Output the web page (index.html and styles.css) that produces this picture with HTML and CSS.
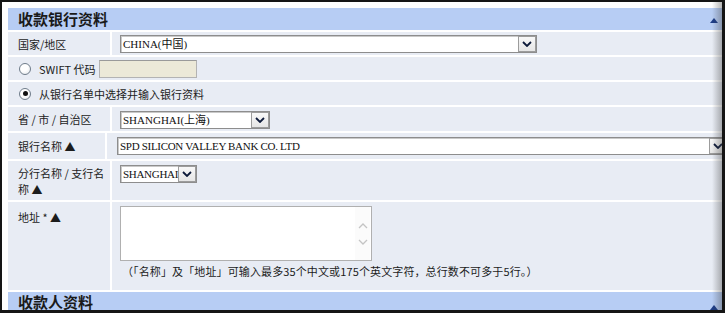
FILE: index.html
```html
<!DOCTYPE html>
<html lang="zh-CN">
<head>
<meta charset="utf-8">
<title>收款银行资料</title>
<link rel="stylesheet" href="styles.css">
</head>
<body>
<div class="frame">
  <div class="panel">
    <div class="section-head">
      <span class="title">收款银行资料</span>
      <span class="collapse"></span>
    </div>

    <div class="row r1">
      <div class="label">国家/地区</div>
      <div class="value">
        <div class="select sel-country">
          <span class="sel-text">CHINA(中国)</span>
          <span class="sel-btn"><svg width="10" height="6" viewBox="0 0 10 6"><path d="M1 1 L5 5 L9 1" fill="none" stroke="#0d1a3a" stroke-width="1.8"/></svg></span>
        </div>
      </div>
    </div>

    <div class="row r2">
      <div class="full">
        <span class="radio"></span>
        <span class="opt-text">SWIFT 代码</span>
        <span class="swift-input"></span>
      </div>
    </div>

    <div class="row r3">
      <div class="full">
        <span class="radio checked"></span>
        <span class="opt-text">从银行名单中选择并输入银行资料</span>
      </div>
    </div>

    <div class="row r4">
      <div class="label">省 / 市 / 自治区</div>
      <div class="value">
        <div class="select sel-prov">
          <span class="sel-text">SHANGHAI(上海)</span>
          <span class="sel-btn"><svg width="10" height="6" viewBox="0 0 10 6"><path d="M1 1 L5 5 L9 1" fill="none" stroke="#0d1a3a" stroke-width="1.8"/></svg></span>
        </div>
      </div>
    </div>

    <div class="row r5">
      <div class="label narrow">银行名称 ▲</div>
      <div class="value wide">
        <div class="select sel-bank">
          <span class="sel-text">SPD SILICON VALLEY BANK CO. LTD</span>
          <span class="sel-btn"><svg width="10" height="6" viewBox="0 0 10 6"><path d="M1 1 L5 5 L9 1" fill="none" stroke="#0d1a3a" stroke-width="1.8"/></svg></span>
        </div>
      </div>
    </div>

    <div class="row r6">
      <div class="label top">分行名称 / 支行名<br>称 ▲</div>
      <div class="value top">
        <div class="select sel-branch">
          <span class="sel-text">SHANGHAI</span>
          <span class="sel-btn"><svg width="10" height="6" viewBox="0 0 10 6"><path d="M1 1 L5 5 L9 1" fill="none" stroke="#0d1a3a" stroke-width="1.8"/></svg></span>
        </div>
      </div>
    </div>

    <div class="row r7">
      <div class="label top addr">地址 * ▲</div>
      <div class="value top addr-val">
        <div class="textarea">
          <span class="ta-scroll">
            <svg width="10" height="6" viewBox="0 0 10 6"><path d="M1 5 L5 1 L9 5" fill="none" stroke="#c4c4c4" stroke-width="1.3"/></svg>
            <svg width="10" height="6" viewBox="0 0 10 6"><path d="M1 1 L5 5 L9 1" fill="none" stroke="#c4c4c4" stroke-width="1.3"/></svg>
          </span>
        </div>
        <div class="note">（「名称」及「地址」可输入最多35个中文或175个英文字符，总行数不可多于5行。）</div>
      </div>
    </div>

    <div class="section-head second">
      <span class="title">收款人资料</span>
      <span class="collapse"></span>
    </div>
  </div>
</div>
</body>
</html>
```

FILE: styles.css
```css
* { box-sizing: border-box; }

html, body {
  margin: 0;
  padding: 0;
  background: #ffffff;
}

body {
  font-family: "Noto Sans CJK SC", "Noto Sans", sans-serif;
  font-size: 11px;
  color: #1c1c1c;
}

.frame {
  position: relative;
  width: 725px;
  height: 313px;
  border-style: solid;
  border-color: #151515;
  border-width: 2px 3px 3px 2px;
  padding: 6px 0 0 6px;
  background: #ffffff;
  overflow: hidden;
}

.frame::after {
  content: "";
  position: absolute;
  top: 0;
  right: 0;
  bottom: 0;
  width: 10px;
  background: linear-gradient(to right, rgba(60, 60, 60, 0), rgba(60, 60, 60, 0.38));
}

.panel {
  display: flex;
  flex-direction: column;
  gap: 2px;
  width: 714px;
}

.section-head {
  display: flex;
  align-items: center;
  height: 22px;
  background: #b7cdf4;
  padding: 0 4px 0 10px;
  flex: none;
}

.section-head.second {
  height: 20px;
}

.title {
  font-size: 15px;
  font-weight: bold;
  color: #1a1a1a;
  line-height: 18px;
}

.collapse {
  margin-left: auto;
  width: 0;
  height: 0;
  border-left: 4px solid transparent;
  border-right: 4px solid transparent;
  border-bottom: 5px solid #1d3d87;
  margin-top: 2px;
}

.section-head.second .collapse {
  margin-top: 10px;
}

.row {
  display: flex;
  gap: 2px;
  flex: none;
}

.r1, .r2, .r3 { height: 23px; }
.r4 { height: 24px; }
.r5 { height: 26px; }
.r6 { height: 39px; }
.r7 { height: 88px; }

.label {
  width: 102px;
  flex: none;
  background: #e8ecf4;
  padding: 0 4px 0 10px;
  display: flex;
  align-items: center;
  white-space: nowrap;
  line-height: 16px;
}

.label.narrow { width: 97px; }

.label.top {
  align-items: flex-start;
  padding-top: 4px;
  display: block;
}

.label.addr { padding-top: 7px; }

.value {
  flex: 1;
  background: #e8ecf4;
  display: flex;
  align-items: center;
  padding-left: 8px;
  min-width: 0;
}

.value.wide { padding-left: 10px; }

.value.top {
  align-items: flex-start;
  padding-top: 4px;
}

.full {
  flex: 1;
  background: #e8ecf4;
  display: flex;
  align-items: center;
  padding-left: 11px;
}

.radio {
  width: 12px;
  height: 12px;
  border-radius: 50%;
  border: 1px solid #6f7c8a;
  background: radial-gradient(circle at 40% 35%, #ffffff 40%, #dfe3e8 100%);
  display: inline-flex;
  align-items: center;
  justify-content: center;
  margin-right: 8px;
  flex: none;
}

.radio.checked::before {
  content: "";
  width: 5px;
  height: 5px;
  border-radius: 50%;
  background: #101010;
}

.opt-text {
  white-space: nowrap;
}

.swift-input {
  width: 98px;
  height: 18px;
  margin-left: 3px;
  background: #ece9d8;
  border: 1px solid #b3b3b3;
  border-top-color: #9a9a9a;
}

.select {
  display: flex;
  align-items: center;
  height: 18px;
  background: #ffffff;
  border: 1px solid #8d8d8d;
  box-shadow: inset 1px 1px 0 #c9c9c9;
  font-family: "Liberation Serif", "Noto Sans CJK SC", serif;
  font-size: 11px;
  color: #111111;
  flex: none;
}

.sel-text {
  flex: 1;
  padding-left: 2px;
  white-space: nowrap;
  overflow: hidden;
  line-height: 16px;
}

.sel-btn {
  width: 18px;
  height: 16px;
  border: 1px solid #9c9c9c;
  background: linear-gradient(#f8f8f8, #e6e6e6);
  display: flex;
  align-items: center;
  justify-content: center;
  flex: none;
}

.sel-country { width: 417px; }
.sel-prov { width: 150px; margin-top: 1px; }
.sel-bank { width: 611px; letter-spacing: -0.3px; }
.sel-branch { width: 77px; margin-top: 0; letter-spacing: -0.3px; }

.addr-val {
  flex-direction: column;
  align-items: flex-start;
  padding-top: 6px;
}

.textarea {
  width: 252px;
  height: 55px;
  margin-left: 0;
  background: #ffffff;
  border: 1px solid #b0b0b0;
  display: flex;
  justify-content: flex-end;
}

.ta-scroll {
  width: 15px;
  display: flex;
  flex-direction: column;
  align-items: center;
  justify-content: center;
  gap: 10px;
  background: #fbfbfb;
  margin-right: 1px;
}

.note {
  margin-top: 2px;
  margin-left: 2px;
  white-space: nowrap;
  font-size: 11px;
  letter-spacing: 0.12px;
  line-height: 16px;
}
```
